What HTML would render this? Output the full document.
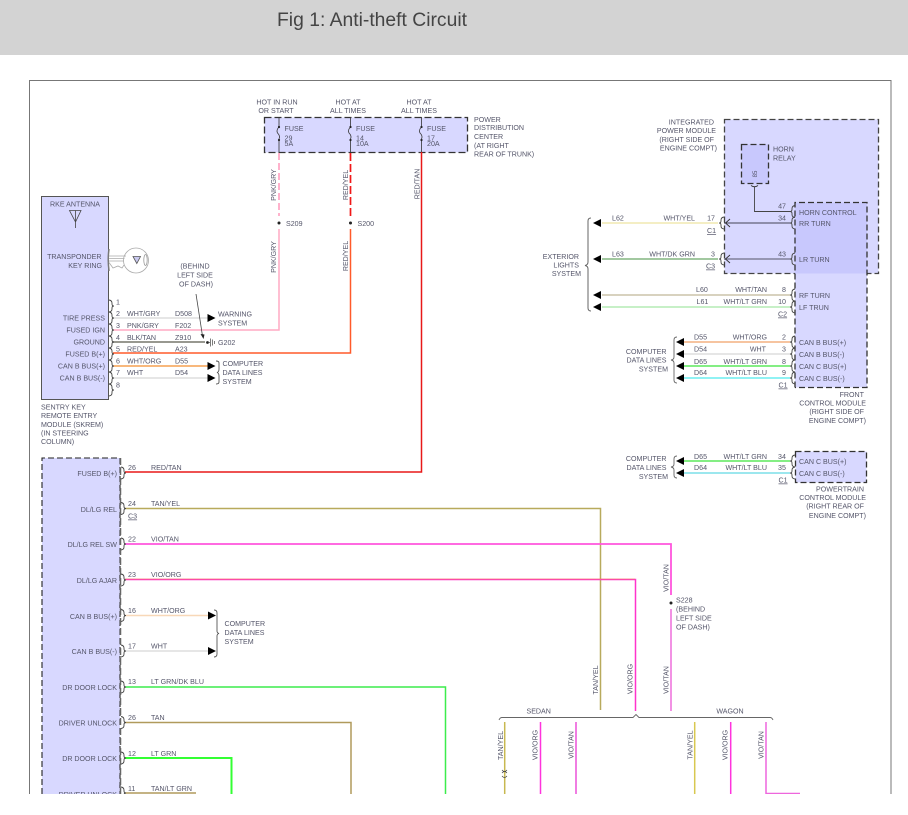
<!DOCTYPE html>
<html lang="en">
<head>
<meta charset="utf-8">
<title>Fig 1: Anti-theft Circuit</title>
<style>
html,body{margin:0;padding:0;background:#fff;width:908px;height:815px;overflow:hidden}
svg{display:block;position:absolute;left:0;top:0}
text{font-family:"Liberation Sans",sans-serif;font-size:7.1px;fill:#55566a}
.e{text-anchor:end}.m{text-anchor:middle}
.t{font-size:19.5px;fill:#444}
.w{fill:none;stroke-linecap:butt;stroke-linejoin:miter}
.b{fill:none;stroke:#555;stroke-width:.9}
.u{text-decoration:underline}
</style>
</head>
<body>
<svg width="908" height="815" viewBox="0 0 908 815" xmlns="http://www.w3.org/2000/svg">
<defs>
<path id="pr" d="M-2,-6 q3,.5 3,3 v1 q0,2 2,2 q-2,0 -2,2 v1 q0,2.500 -3,3" fill="none" stroke="#444" stroke-width=".9"/>
<path id="pl" d="M2,-6 q-3,.5 -3,3 v1 q0,2 -2,2 q2,0 2,2 v1 q0,2.500 3,3" fill="none" stroke="#444" stroke-width=".9"/>
<path id="ar" d="M0,-4 L8,0 L0,4 Z" fill="#000"/>
<path id="al" d="M0,-4 L-8,0 L0,4 Z" fill="#000"/>
</defs>
<rect x="0" y="0" width="908" height="55" fill="#d3d3d3"/>
<text class="t" x="277" y="26" textLength="190" lengthAdjust="spacingAndGlyphs">Fig 1: Anti-theft Circuit</text>
<rect x="29.500" y="80.500" width="861.500" height="730" fill="#fff" stroke="#777" stroke-width="1"/>

<!-- modules -->
<rect x="264.500" y="117.500" width="203" height="35" fill="#d8d8ff" stroke="#333" stroke-width="1.300" stroke-dasharray="7 3"/>
<rect x="41.500" y="196.500" width="67" height="203" fill="#d8d8ff" stroke="#555" stroke-width="1"/>
<rect x="724.500" y="119.500" width="154" height="154" fill="#d8d8ff" stroke="#444" stroke-width="1.300" stroke-dasharray="6 3"/>
<rect x="795" y="202.500" width="72" height="185" fill="#d8d8ff"/>
<rect x="795" y="202.500" width="72" height="71" fill="#c8c8fd"/>
<path d="M795,387.500 V202.500 H867 V387.500 H795" fill="none" stroke="#333" stroke-width="1.300" stroke-dasharray="6 3"/>
<rect x="741.500" y="144.500" width="27" height="39" fill="#c8c8fd" stroke="#333" stroke-width="1.300" stroke-dasharray="6 3"/>
<rect x="795.500" y="451.500" width="71" height="31" fill="#d8d8ff" stroke="#333" stroke-width="1.300" stroke-dasharray="6 3"/>
<rect x="42" y="458" width="78" height="336" fill="#d8d8ff"/>
<path d="M42,794 V458 H120 V794" fill="none" stroke="#222" stroke-width="1.100" stroke-dasharray="6 3"/>
<path d="M120.500,458 V794" fill="none" stroke="#666" stroke-width="1.500" stroke-dasharray="7 3"/>

<!-- fuses -->
<g fill="none" stroke="#333" stroke-width=".8">
<path d="M279,117 V127 q-3,3 -1.500,6 q3,3 1.500,6 V152"/>
<path d="M350.500,117 V127 q-3,3 -1.500,6 q3,3 1.500,6 V152"/>
<path d="M421.500,117 V127 q-3,3 -1.500,6 q3,3 1.500,6 V152"/>
</g>
<g fill="#222"><circle cx="279" cy="127" r="1.100"/><circle cx="279" cy="140" r="1.100"/><circle cx="350.500" cy="127" r="1.100"/><circle cx="350.500" cy="140" r="1.100"/><circle cx="421.500" cy="127" r="1.100"/><circle cx="421.500" cy="140" r="1.100"/></g>

<!-- top wires -->
<path class="w" d="M279,153 V216" stroke="#ff9fc0" stroke-width="1.600" stroke-dasharray="7 3"/>
<path class="w" d="M279,229 V330 H113" stroke="#ffaac4" stroke-width="1.500"/>
<path class="w" d="M350.500,153 V218" stroke="#f01818" stroke-width="1.700" stroke-dasharray="8 3"/>
<path class="w" d="M350.500,229 V353 H113" stroke="#ff5a2a" stroke-width="1.500"/>
<path class="w" d="M421.500,152 V472 H125" stroke="#e81818" stroke-width="1.500"/>
<circle cx="279" cy="223" r="1.500" fill="#222"/>
<circle cx="350.500" cy="223" r="1.500" fill="#222"/>

<!-- SKREM wires -->
<path d="M113,318 H208" stroke="#ddd" stroke-width="1.500"/>
<path d="M113,342 H205" stroke="#8a8a80" stroke-width="1.800"/>
<path d="M113,366 H208" stroke="#f6a050" stroke-width="1.500"/>
<path d="M113,378 H208" stroke="#ddd" stroke-width="1.500"/>
<use href="#ar" x="207.500" y="318"/><use href="#ar" x="207.500" y="366"/><use href="#ar" x="207.500" y="378"/>
<use href="#pr" x="111" y="306"/><use href="#pr" x="111" y="318"/><use href="#pr" x="111" y="330"/><use href="#pr" x="111" y="342"/><use href="#pr" x="111" y="354"/><use href="#pr" x="111" y="366"/><use href="#pr" x="111" y="378"/><use href="#pr" x="111" y="390"/>
<path class="b" d="M218,361 q3,0 3,2 v6 q0,3 -2,3.500 q2,.5 2,3.500 v6 q0,2 -3,2" transform="translate(-2,0)"/>
<!-- ground -->
<path d="M196,294 L202.500,336" stroke="#444" stroke-width=".8" fill="none"/>
<path d="M200.500,334 L204.500,334.500 L203.500,339 Z" fill="#222"/>
<circle cx="207.500" cy="342.500" r="1.400" fill="#222"/>
<path d="M210.500,338.500 v8 M212.500,339.500 v6 M214.500,341 v3 M208,342.500 h2" stroke="#444" stroke-width=".7" fill="none"/>

<!-- antenna and key -->
<path d="M69.500,210.500 H81 L75.500,222 Z M75.500,210.500 V228" fill="none" stroke="#444" stroke-width=".8"/>
<path d="M106.500,249 q2,-4 2,-8 V270 q0,-4 -2,-8" fill="none" stroke="#777" stroke-width="0"/>
<path d="M109,249 q-1.500,10 0,22" fill="none" stroke="#777" stroke-width="1.500"/>
<g fill="none" stroke="#aaa" stroke-width=".8">
<circle cx="136" cy="260.500" r="12.500"/>
<ellipse cx="145.500" cy="260" rx="1.700" ry="5.500" stroke="#999"/>
<path d="M109,256 H126 M109,258.500 H124.500 M109,261 H124 M109,262.500 L113,268 L118,266 L122,268 L124,265"/>
</g>
<path d="M133,256.500 H140.500 L136.800,263.500 Z" fill="#c9c9f0" stroke="#555" stroke-width=".8"/>

<!-- horn relay and IPM wires -->
<path d="M754.500,187 V211.500 H790" fill="none" stroke="#444" stroke-width=".9"/>
<path d="M751,185.500 q3.500,2.500 7,0" fill="none" stroke="#333" stroke-width=".9"/>
<path d="M724,223 H790" stroke="#445" stroke-width="1"/>
<path d="M724,259 H790" stroke="#8c8ca8" stroke-width="1.800"/>
<path d="M602,223 H718" stroke="#f0e8b0" stroke-width="1.500"/>
<path d="M602,259 H718" stroke="#6aa868" stroke-width="1.300"/>
<path d="M602,295 H790" stroke="#d3ccb6" stroke-width="1.700"/>
<path d="M602,307 H790" stroke="#bfeebf" stroke-width="1.700"/>
<use href="#al" x="601" y="223"/><use href="#al" x="601" y="259"/><use href="#al" x="601" y="295"/><use href="#al" x="601" y="307"/>
<use href="#pl" x="722" y="223"/><use href="#pl" x="722" y="259"/>
<use href="#pl" x="793" y="211.500"/><use href="#pl" x="793" y="223"/><use href="#pl" x="793" y="259"/><use href="#pl" x="793" y="295"/><use href="#pl" x="793" y="307"/>
<path d="M730,219 L725.500,223 L730,227 M730,255 L725.500,259 L730,263" fill="none" stroke="#333" stroke-width=".9"/>
<path d="M591,218 q-3,0 -3,3 v41 q0,3 -3,3.500 q3,.5 3,3.500 v39 q0,3 3,3" fill="none" stroke="#666" stroke-width="1"/>

<!-- front control module wires -->
<path d="M684,342 H790" stroke="#f4b080" stroke-width="1.500"/>
<path d="M684,354 H790" stroke="#ddd" stroke-width="1.500"/>
<path d="M684,366 H790" stroke="#5ce85c" stroke-width="1.600"/>
<path d="M684,378 H790" stroke="#6ceef0" stroke-width="1.600"/>
<use href="#al" x="684" y="342"/><use href="#al" x="684" y="354"/><use href="#al" x="684" y="366"/><use href="#al" x="684" y="378"/>
<use href="#pl" x="793" y="342"/><use href="#pl" x="793" y="354"/><use href="#pl" x="793" y="366"/><use href="#pl" x="793" y="378"/>
<path d="M677,337 q-3,0 -3,3 v17 q0,2.500 -3,3 q3,.5 3,3 v17 q0,3 3,3" fill="none" stroke="#666" stroke-width=".9"/>
<path d="M684,461 H790" stroke="#5ce85c" stroke-width="1.600"/>
<path d="M684,473 H790" stroke="#7cdfe8" stroke-width="1.600"/>
<use href="#al" x="684" y="461"/><use href="#al" x="684" y="473"/>
<use href="#pl" x="793" y="461"/><use href="#pl" x="793" y="473"/>
<path d="M677,456 q-3,0 -3,3 v5 q0,2.500 -3,3 q3,.5 3,3 v5 q0,3 3,3" fill="none" stroke="#666" stroke-width=".9"/>

<!-- lower wires -->
<path class="w" d="M125,508.500 H600.500 V710" stroke="#b8aa5c" stroke-width="1.500"/>
<path class="w" d="M125,544 H671 V595" stroke="#ff55dd" stroke-width="1.800"/>
<path class="w" d="M671,609 V711" stroke="#ee77dd" stroke-width="1.600"/>
<path class="w" d="M125,579.500 H635.500 V711" stroke="#ff33cc" stroke-width="1.500"/>
<path class="w" d="M125,579 H635" stroke="#f09040" stroke-width=".5"/>
<circle cx="671" cy="603" r="1.500" fill="#222"/>
<path d="M125,615.500 H208" stroke="#f8d8b8" stroke-width="1.500"/>
<path d="M125,651 H208" stroke="#ddd" stroke-width="1.500"/>
<use href="#ar" x="208" y="615.500"/><use href="#ar" x="208" y="651"/>
<path class="b" d="M214,610 q3,0 3,3 v18 q0,2 2,2.500 q-2,.5 -2,2.500 v18 q0,3 -3,3"/>
<path class="w" d="M125,687 H445.500 V794" stroke="#3cec4c" stroke-width="1.500"/>
<path class="w" d="M125,722.500 H351 V794" stroke="#b09a5c" stroke-width="1.500"/>
<path class="w" d="M125,758 H231.500 V794" stroke="#33ff33" stroke-width="2"/>
<path class="w" d="M125,793 H196" stroke="#b09a5c" stroke-width="1.500"/>
<use href="#pr" x="123" y="473"/><use href="#pr" x="123" y="508.500"/><use href="#pr" x="123" y="544"/><use href="#pr" x="123" y="580"/><use href="#pr" x="123" y="615.500"/><use href="#pr" x="123" y="651"/><use href="#pr" x="123" y="687"/><use href="#pr" x="123" y="722.500"/><use href="#pr" x="123" y="758"/><use href="#pr" x="123" y="793"/>

<!-- sedan/wagon bracket -->
<path d="M499,720 q1,-2.500 3,-2.500 H633 L636,714.500 L639,717.500 H770 q2,0 3,2.500" fill="none" stroke="#666" stroke-width=".9"/>
<path d="M504.700,722 V794" stroke="#c8b850" stroke-width="1.500"/>
<path d="M540.500,722 V794" stroke="#ff33dd" stroke-width="1.500"/>
<path d="M576,722 V794" stroke="#ee66dd" stroke-width="1.700"/>
<path d="M694.700,722 V794" stroke="#d8c850" stroke-width="1.500"/>
<path d="M730.700,722 V794" stroke="#ff33dd" stroke-width="1.500"/>
<path class="w" d="M766,722 V793.500 H800" stroke="#ee66dd" stroke-width="1.500"/>
<path d="M502,770 q2.500,3 5,0 M502,773 q2.500,-3 5,0 M502,776 q2.500,3 5,0" fill="none" stroke="#444" stroke-width=".7"/>

<!-- PDC labels -->
<text class="m" x="277" y="104.500">HOT IN RUN</text><text class="m" x="276" y="113">OR START</text>
<text class="m" x="348" y="104.500">HOT AT</text><text class="m" x="348" y="113">ALL TIMES</text>
<text class="m" x="419" y="104.500">HOT AT</text><text class="m" x="419" y="113">ALL TIMES</text>
<text x="284.500" y="131">FUSE</text><text x="284.500" y="140.500">29</text><text x="284.500" y="146">5A</text>
<text x="356" y="131">FUSE</text><text x="356" y="140.500">14</text><text x="356" y="146">10A</text>
<text x="427" y="131">FUSE</text><text x="427" y="140.500">17</text><text x="427" y="146">20A</text>
<text x="474" y="122">POWER</text><text x="474" y="130">DISTRIBUTION</text><text x="474" y="139">CENTER</text><text x="474" y="148">(AT RIGHT</text><text x="474" y="156.500">REAR OF TRUNK)</text>
<text class="m" transform="translate(276,185) rotate(-90)">PNK/GRY</text>
<text class="m" transform="translate(276,257) rotate(-90)">PNK/GRY</text>
<text class="m" transform="translate(348,185) rotate(-90)">RED/YEL</text>
<text class="m" transform="translate(348,256) rotate(-90)">RED/YEL</text>
<text class="m" transform="translate(419.500,184) rotate(-90)">RED/TAN</text>
<text x="286" y="226">S209</text><text x="357.500" y="226">S200</text>

<!-- SKREM labels -->
<text class="m" x="75" y="206.500">RKE ANTENNA</text>
<text class="e" x="101.500" y="259">TRANSPONDER</text><text class="e" x="102" y="268">KEY RING</text>
<text class="e" x="105" y="320.500">TIRE PRESS</text><text class="e" x="105" y="332.500">FUSED IGN</text><text class="e" x="105" y="344.500">GROUND</text><text class="e" x="105" y="356.500">FUSED B(+)</text><text class="e" x="105" y="368.500">CAN B BUS(+)</text><text class="e" x="105" y="380.500">CAN B BUS(-)</text>
<text x="116" y="304.500">1</text><text x="116" y="316">2</text><text x="116" y="328">3</text><text x="116" y="340">4</text><text x="116" y="351.500">5</text><text x="116" y="363.500">6</text><text x="116" y="375">7</text><text x="116" y="387.500">8</text>
<text x="127" y="316">WHT/GRY</text><text x="175" y="316">D508</text>
<text x="127" y="328">PNK/GRY</text><text x="175" y="328">F202</text>
<text x="127" y="340">BLK/TAN</text><text x="175" y="340">Z910</text>
<text x="127" y="351.500">RED/YEL</text><text x="175" y="351.500">A23</text>
<text x="127" y="363.500">WHT/ORG</text><text x="175" y="363.500">D55</text>
<text x="127" y="375">WHT</text><text x="175" y="375">D54</text>
<text x="218" y="316.500">WARNING</text><text x="218" y="325.500">SYSTEM</text>
<text x="218" y="345">G202</text>
<text x="222.500" y="366">COMPUTER</text><text x="222.500" y="375">DATA LINES</text><text x="222.500" y="384">SYSTEM</text>
<text class="m" x="195" y="268.500">(BEHIND</text><text class="m" x="195" y="277.500">LEFT SIDE</text><text class="m" x="196" y="286.500">OF DASH)</text>
<text x="41" y="409.500">SENTRY KEY</text><text x="41" y="418">REMOTE ENTRY</text><text x="41" y="427">MODULE (SKREM)</text><text x="41" y="435.500">(IN STEERING</text><text x="41" y="444">COLUMN)</text>

<!-- IPM labels -->
<text class="e" x="714" y="124.500">INTEGRATED</text><text class="e" x="716" y="133">POWER MODULE</text><text class="e" x="714" y="142">(RIGHT SIDE OF</text><text class="e" x="717" y="150.500">ENGINE COMPT)</text>
<text x="773" y="151.500">HORN</text><text x="773" y="160.500">RELAY</text>
<text class="m" style="font-size:6px" transform="translate(757,174) rotate(-90)">85</text>
<text class="e" x="786" y="208.500">47</text><text class="e" x="786" y="220.500">34</text><text class="e" x="786" y="256.500">43</text>
<text x="799" y="215">HORN CONTROL</text><text x="799" y="226">RR TURN</text><text x="799" y="262">LR TURN</text><text x="799" y="298">RF TURN</text><text x="799" y="310">LF TRUN</text>
<text x="612" y="220.500">L62</text><text class="e" x="695" y="220.500">WHT/YEL</text><text class="e" x="715" y="220.500">17</text><text class="u" x="707" y="233">C1</text>
<text x="612" y="256.500">L63</text><text class="e" x="695" y="256.500">WHT/DK GRN</text><text class="e" x="715" y="256.500">3</text><text class="u" x="706" y="268.500">C3</text>
<text x="696" y="292">L60</text><text class="e" x="767" y="292">WHT/TAN</text><text class="e" x="786" y="292">8</text>
<text x="696.500" y="304">L61</text><text class="e" x="767" y="304">WHT/LT GRN</text><text class="e" x="786" y="304">10</text><text class="u" x="778" y="316.500">C2</text>
<text class="e" x="579" y="259">EXTERIOR</text><text class="e" x="579" y="267.500">LIGHTS</text><text class="e" x="581" y="276">SYSTEM</text>

<!-- FCM labels -->
<text x="694" y="339.500">D55</text><text class="e" x="767" y="339.500">WHT/ORG</text><text class="e" x="786" y="339.500">2</text>
<text x="694" y="351.500">D54</text><text class="e" x="766" y="351.500">WHT</text><text class="e" x="786" y="351.500">3</text>
<text x="694" y="364">D65</text><text class="e" x="767" y="364">WHT/LT GRN</text><text class="e" x="786" y="364">8</text>
<text x="694" y="375">D64</text><text class="e" x="767" y="375">WHT/LT BLU</text><text class="e" x="786" y="375">9</text>
<text x="799" y="345">CAN B BUS(+)</text><text x="799" y="357">CAN B BUS(-)</text><text x="799" y="369">CAN C BUS(+)</text><text x="799" y="381">CAN C BUS(-)</text>
<text class="u" x="778.500" y="387.500">C1</text>
<text class="e" x="666.500" y="354">COMPUTER</text><text class="e" x="666.500" y="362.500">DATA LINES</text><text class="e" x="668" y="371.500">SYSTEM</text>
<text class="e" x="864" y="397">FRONT</text><text class="e" x="866" y="405.500">CONTROL MODULE</text><text class="e" x="864" y="414">(RIGHT SIDE OF</text><text class="e" x="866" y="423">ENGINE COMPT)</text>

<!-- PCM labels -->
<text x="694" y="459">D65</text><text class="e" x="767" y="459">WHT/LT GRN</text><text x="778" y="459">34</text>
<text x="694" y="470">D64</text><text class="e" x="767" y="470">WHT/LT BLU</text><text x="778" y="470">35</text>
<text x="799" y="464">CAN C BUS(+)</text><text x="799" y="476">CAN C BUS(-)</text><text class="u" x="778.500" y="482.500">C1</text>
<text class="e" x="666.500" y="461">COMPUTER</text><text class="e" x="666.500" y="470">DATA LINES</text><text class="e" x="668" y="479">SYSTEM</text>
<text class="e" x="864" y="491.500">POWERTRAIN</text><text class="e" x="866" y="500">CONTROL MODULE</text><text class="e" x="864" y="508.500">(RIGHT REAR OF</text><text class="e" x="866" y="518">ENGINE COMPT)</text>

<!-- lower left labels -->
<text class="e" x="117" y="476">FUSED B(+)</text><text class="e" x="117" y="512">DL/LG REL</text><text class="e" x="117" y="547">DL/LG REL SW</text><text class="e" x="117" y="583">DL/LG AJAR</text><text class="e" x="117" y="619">CAN B BUS(+)</text><text class="e" x="117" y="654">CAN B BUS(-)</text><text class="e" x="117" y="690">DR DOOR LOCK</text><text class="e" x="117" y="725.500">DRIVER UNLOCK</text><text class="e" x="117" y="761">DR DOOR LOCK</text><text class="e" x="117" y="797">DRIVER UNLOCK</text>
<text x="128" y="470">26</text><text x="151" y="470">RED/TAN</text>
<text x="128" y="506">24</text><text x="151" y="506">TAN/YEL</text><text class="u" x="128" y="518.500">C3</text>
<text x="128" y="541.500">22</text><text x="151" y="541.500">VIO/TAN</text>
<text x="128" y="577">23</text><text x="151" y="577">VIO/ORG</text>
<text x="128" y="613">16</text><text x="151" y="613">WHT/ORG</text>
<text x="128" y="648.500">17</text><text x="151" y="648.500">WHT</text>
<text x="128" y="684">13</text><text x="151" y="684">LT GRN/DK BLU</text>
<text x="128" y="720">26</text><text x="151" y="720">TAN</text>
<text x="128" y="756">12</text><text x="151" y="756">LT GRN</text>
<text x="128" y="791">11</text><text x="151" y="791">TAN/LT GRN</text>
<text x="224.500" y="626">COMPUTER</text><text x="224.500" y="635">DATA LINES</text><text x="224.500" y="644">SYSTEM</text>

<!-- right side verticals -->
<text class="m" transform="translate(598,680) rotate(-90)">TAN/YEL</text>
<text class="m" transform="translate(632.500,679) rotate(-90)">VIO/ORG</text>
<text class="m" transform="translate(668.500,680) rotate(-90)">VIO/TAN</text>
<text class="m" transform="translate(668.500,578) rotate(-90)">VIO/TAN</text>
<text x="676" y="602.500">S228</text><text x="676" y="611.500">(BEHIND</text><text x="676" y="620.500">LEFT SIDE</text><text x="676" y="629.500">OF DASH)</text>
<text class="m" x="538.700" y="713.500">SEDAN</text><text class="m" x="730" y="713.500">WAGON</text>
<text class="m" transform="translate(503,745.500) rotate(-90)">TAN/YEL</text>
<text class="m" transform="translate(537.500,745) rotate(-90)">VIO/ORG</text>
<text class="m" transform="translate(573.500,745) rotate(-90)">VIO/TAN</text>
<text class="m" transform="translate(692.500,745) rotate(-90)">TAN/YEL</text>
<text class="m" transform="translate(727.500,745) rotate(-90)">VIO/ORG</text>
<text class="m" transform="translate(763.500,745) rotate(-90)">VIO/TAN</text>

<!-- clip bottom -->
<rect x="0" y="794" width="908" height="21" fill="#fff"/>
</svg>
</body>
</html>
